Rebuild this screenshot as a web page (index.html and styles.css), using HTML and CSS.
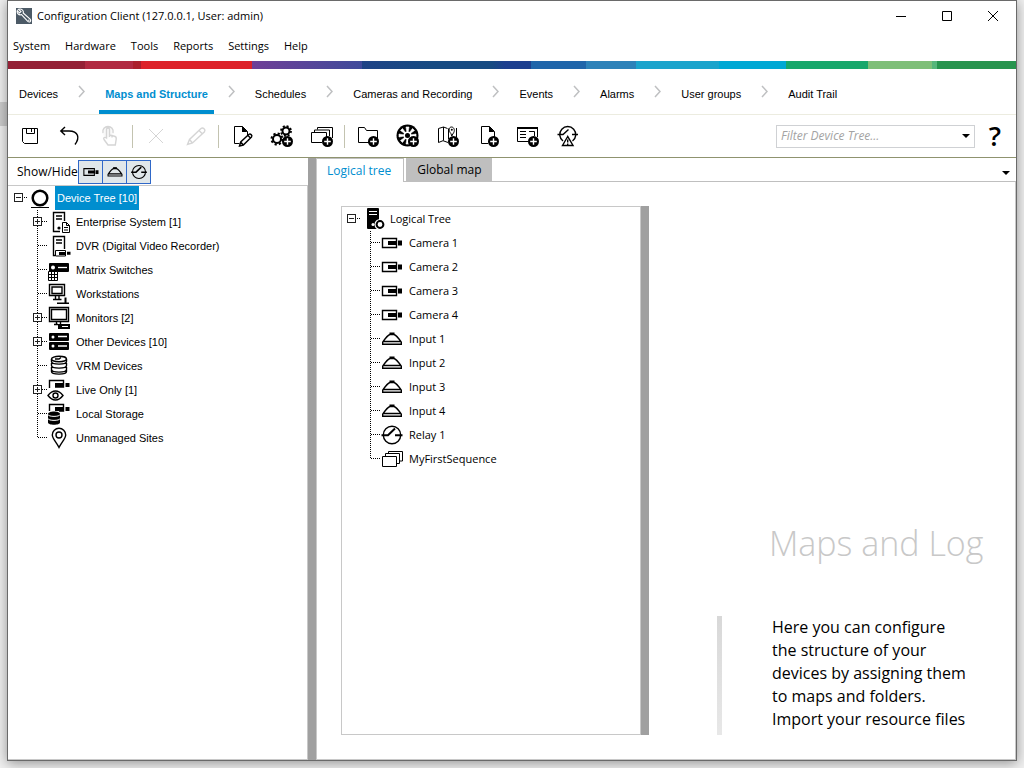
FILE: index.html
```html
<!DOCTYPE html>
<html lang="en">
<head>
<meta charset="utf-8">
<title>Configuration Client</title>
<link rel="stylesheet" href="styles.css">
</head>
<body>
<svg class="sprite" aria-hidden="true">
  <symbol id="plus" viewBox="0 0 24 24"><circle cx="17.5" cy="17.5" r="5.5" fill="#000"/><path d="M17.5 14.2v6.6M14.2 17.5h6.6" stroke="#fff" stroke-width="1.4"/></symbol>
  <symbol id="joint-root" viewBox="0 0 19 24"><path d="M15 11.500h5" class="dots"/><path d="M5.500 7.500h8v8h-8zM7 11.500h5" class="thin"/></symbol>
  <symbol id="joint-mid" viewBox="0 0 19 24"><path d="M9.500 0v24M10 11.500h9" class="dots"/></symbol>
  <symbol id="joint-plus" viewBox="0 0 19 24"><path d="M9.500 0v24M14 11.500h5" class="dots"/><path d="M5.500 7.500h8v8h-8z" fill="#fff" class="thin box"/><path d="M7 11.500h5M9.500 9v5" class="thin"/></symbol>
  <symbol id="joint-end" viewBox="0 0 19 24"><path d="M9.500 0v12M10 11.500h9" class="dots"/></symbol>
  <symbol id="cam" viewBox="0 0 24 24"><path d="M2.500 7.500h14v9h-14z" class="s15"/><path d="M8 10h9v4H8zM18 9.500h4v5h-4z"/></symbol>
  <symbol id="input" viewBox="0 0 24 24"><path d="M2.700 17.300v-2.100c2.300-3.400 5.300-7.200 7.300-7.700h4c2 .5 5 4.300 7.300 7.700v2.100zM3 14.500h18" class="s15"/><path d="M9.500 5.500h5V8h-5z"/></symbol>
  <symbol id="relay" viewBox="0 0 24 24"><circle cx="12" cy="12" r="8.700" class="s15"/><path d="M1.500 12.200H8l7-6.700M15 12.200h7.500" class="s2"/></symbol>
  <symbol id="sequence" viewBox="0 0 24 24"><path d="M2.500 9.500h14v10h-14zM5.500 9V6.500h14v10H17M8.500 6V4.500h14v9.500H20" class="s1"/></symbol>
</svg>

<main class="window">
  <header class="titlebar">
    <svg class="app-icon" viewBox="0 0 16 16" aria-hidden="true"><path fill="#4c5a66" d="M0 0h16v16H0z"/><path d="M2.500 1.300 5 3.500 3.500 5 1.300 2.600C.5 5.500 3 7.500 5.500 6.600l6.300 6.800c2 1.500 3.700-.3 2.300-2.200L7.200 5C8 2.500 5.500.3 2.500 1.300z" fill="none" stroke="#fff" stroke-width="1.100"/><circle cx="12.800" cy="12.300" r=".7" fill="#fff"/></svg>
    <h1>Configuration Client (127.0.0.1, User: admin)</h1>
    <div class="window-controls">
      <button aria-label="Minimize"><svg viewBox="0 0 12 12"><path d="M1 6.500h10" class="s1"/></svg></button>
      <button aria-label="Maximize"><svg viewBox="0 0 12 12"><path d="M1.500 1.500h9v9h-9z" class="s1"/></svg></button>
      <button aria-label="Close"><svg viewBox="0 0 12 12"><path d="m1 1 10 10M11 1 1 11" class="s1"/></svg></button>
    </div>
  </header>
  <div class="menubar" role="menubar">
    <button role="menuitem">System</button>
    <button role="menuitem">Hardware</button>
    <button role="menuitem">Tools</button>
    <button role="menuitem">Reports</button>
    <button role="menuitem">Settings</button>
    <button role="menuitem">Help</button>
  </div>
  <div class="stripe"></div>
  <nav class="steps">
    <a href="#devices">Devices</a>
    <svg viewBox="0 0 7 13"><path d="m1 1 5 5.500-5 5.500"/></svg>
    <a href="#maps" class="current" aria-current="page">Maps and Structure</a>
    <svg viewBox="0 0 7 13"><path d="m1 1 5 5.500-5 5.500"/></svg>
    <a href="#schedules">Schedules</a>
    <svg viewBox="0 0 7 13"><path d="m1 1 5 5.500-5 5.500"/></svg>
    <a href="#cameras">Cameras and Recording</a>
    <svg viewBox="0 0 7 13"><path d="m1 1 5 5.500-5 5.500"/></svg>
    <a href="#events">Events</a>
    <svg viewBox="0 0 7 13"><path d="m1 1 5 5.500-5 5.500"/></svg>
    <a href="#alarms">Alarms</a>
    <svg viewBox="0 0 7 13"><path d="m1 1 5 5.500-5 5.500"/></svg>
    <a href="#groups">User groups</a>
    <svg viewBox="0 0 7 13"><path d="m1 1 5 5.500-5 5.500"/></svg>
    <a href="#audit">Audit Trail</a>
  </nav>

  <div class="toolbar">
    <button aria-label="Save"><svg viewBox="0 0 24 24"><path d="M4.500 4.500h15v15h-13l-2-2zM8.500 4.500v5h8v-5M13.500 5v3" class="s1"/></svg></button>
    <button aria-label="Undo"><svg viewBox="0 0 24 24"><path d="M7 3 2.800 7 7 11M3 7h8c9.500 0 11 7 6 13.500" class="s15"/></svg></button>
    <button aria-label="Activate" disabled><svg viewBox="0 0 24 24"><circle cx="10" cy="8" r="5.500" fill="#ddd"/><path d="M8.500 14V5.500c0-2 3-2 3 0V11l5 1.200c1.500.4 2 1.300 1.700 3l-.9 5.800H10l-4-5.500c-1-1.600.6-2.800 2.500-1.500zM11.500 11v2M14 11.500v2M5 9c-1-4 2-6.500 5-6.500S16 5 15 9" class="s15"/></svg></button>
    <span class="sep"></span>
    <button aria-label="Delete" disabled><svg viewBox="0 0 24 24"><path d="m5 5 14 14M19 5 5 19" class="s1"/></svg></button>
    <button aria-label="Edit" disabled><svg viewBox="0 0 24 24"><path d="m3.500 20.500 2-5L17 4.500c2-1.500 5 1 3.500 3.200L8.500 19zM15 6.500l3.500 3.500M5.500 15.500l3 3.500" class="s15"/></svg></button>
    <span class="sep"></span>
    <button aria-label="Edit document"><svg viewBox="0 0 24 24"><path d="M9.500 19.500h-5v-17h8l5 5v3.500" class="s1"/><path d="M12 2v6h5.500z"/><path d="m9.500 22 1.200-4 8-7.500c1.700-1.300 4 .8 2.800 2.500l-8.200 8zM18 11.500l2.700 2.800M10.700 18l2.600 3" class="s15"/></svg></button>
    <button aria-label="Add device"><svg viewBox="0 0 24 24"><circle cx="7" cy="15" r="4" class="s2"/><circle cx="7" cy="15" r="5.500" fill="none" stroke="#000" stroke-width="2" stroke-dasharray="2.200 2.120"/><circle cx="16" cy="7" r="3.500" class="s2"/><circle cx="16" cy="7" r="5" fill="none" stroke="#000" stroke-width="1.800" stroke-dasharray="2 1.930"/><use href="#plus"/></svg></button>
    <button aria-label="Add sequence"><svg viewBox="0 0 24 24"><path d="M12 18.500H1.500v-10h15V13M4.500 8V6h15v6M7.500 5.500v-2h15V14" class="s1"/><use href="#plus"/></svg></button>
    <span class="sep"></span>
    <button aria-label="Add folder"><svg viewBox="0 0 24 24"><path d="M13 18.500H2.500v-15h6l2 3h11V14" class="s1"/><use href="#plus"/></svg></button>
    <button aria-label="Add wheel"><svg viewBox="0 0 24 24"><circle cx="11.500" cy="11.500" r="11"/><path d="M11.500 11.500 10 3h3zM11.500 11.500 16.500 4.500l2 2zM11.500 11.500l8.500-1.500v3zM11.500 11.500 4.500 6.500l2-2zM11.500 11.500 3 10v3zM11.500 11.500 6.500 18.500l-2-2zM11.500 11.500l1.500 8.500h-3z" fill="#fff" stroke="#fff" stroke-width=".6"/><circle cx="11.500" cy="11.500" r="4" fill="#fff"/><circle cx="11.500" cy="11.500" r="2.500"/><use href="#plus"/></svg></button>
    <button aria-label="Add map"><svg viewBox="0 0 24 24"><path d="M12 18.500l-5-1.800-4.500 1.800V4.500L7.500 3l4 1.500M7.500 3v13.500M12.500 4.500V15M20.500 4v9M15 9.700C12.500 7 12.700 3 15.500 3s4 4 1.300 7l-1 2z" class="s1"/><circle cx="15.800" cy="5.800" r="1"/><use href="#plus"/></svg></button>
    <button aria-label="Add document"><svg viewBox="0 0 24 24"><path d="M12 19.500H5.500v-17h8l5 5V13" class="s1"/><path d="M13 2v6h5.500z"/><use href="#plus"/></svg></button>
    <button aria-label="Add script"><svg viewBox="0 0 24 24"><path d="M12 17.500H1.500v-14h20V13M4 7.500h6M4 10.500h6M4 13.500h6M13 7.500h5.500V12" class="s1"/><path d="M1 3h21v2H1z"/><use href="#plus"/></svg></button>
    <button aria-label="Add malfunction relay"><svg viewBox="0 0 24 24"><path d="M7 17a8 8 0 1 1 9.500 0M1.500 10.500H7l5.500-5M16 10.500h6" class="s15"/><path d="M11.700 12.500 6.500 21.500h10.500zM11.700 15.500v3M11.700 19.500v1.500" class="s15"/></svg></button>
    <label class="filter">
      <select aria-label="Filter Device Tree"><option>Filter Device Tree...</option></select>
      <svg viewBox="0 0 8 4"><path d="M0 0h8L4 4z"/></svg>
    </label>
    <button class="help" aria-label="Help">?</button>
  </div>

  <div class="workspace">
    <section class="devices">
      <div class="showhide">
        <span>Show/Hide</span>
        <button aria-label="Cameras" aria-pressed="true"><svg viewBox="0 0 24 24"><use href="#cam"/></svg></button>
        <button aria-label="Inputs" aria-pressed="true"><svg viewBox="0 0 24 24"><use href="#input"/></svg></button>
        <button aria-label="Relays" aria-pressed="true"><svg viewBox="0 0 24 24"><use href="#relay"/></svg></button>
      </div>
      <ul class="tree device-tree">
        <li>
          <div class="row"><button class="joint" aria-label="Collapse"><svg viewBox="0 0 19 24"><use href="#joint-root"/></svg></button><svg class="icon" viewBox="0 0 24 24"><circle cx="12" cy="12" r="7.300" class="s25"/><path d="M3 21.500h18" class="s1"/></svg><span class="selected">Device Tree [10]</span></div>
          <ul>
            <li class="row"><button class="joint" aria-label="Expand"><svg viewBox="0 0 19 24"><use href="#joint-plus"/></svg></button><svg class="icon" viewBox="0 0 24 24"><path d="M13 21.500H6.500v-19h11V11M9 6h6M9 9h6" class="s15"/><circle cx="12" cy="18" r="1.600"/><path d="M15.500 12.500h4l3 3v7h-7zM19.500 12.500v3h3M17 17.500h4M17 20h4" class="s1"/></svg><span>Enterprise System [1]</span></li>
            <li class="row"><svg class="joint" viewBox="0 0 19 24"><use href="#joint-mid"/></svg><svg class="icon" viewBox="0 0 24 24"><path d="M8 21.500H6.500v-19h11V15M9 6h6M9 9h6" class="s15"/><path d="M8.500 16.500h10v5.500h-10z" fill="#fff" stroke="#000"/><path d="M12 18h6.500v3H12zM20 17.800h3.500v3H20z"/></svg><span>DVR (Digital Video Recorder)</span></li>
            <li class="row"><svg class="joint" viewBox="0 0 19 24"><use href="#joint-mid"/></svg><svg class="icon" viewBox="0 0 24 24"><rect x="2" y="5" width="20" height="9" rx="1"/><path d="M11 9.500h9" stroke="#fff" stroke-width="1.300"/><circle cx="6" cy="9.500" r="2" fill="#fff"/><path d="M1.500 13.500h9v9h-9zM4.500 13.500v9M7.500 13.500v9M1.500 16.500h9M1.500 19.500h9" fill="#fff" stroke="#000"/></svg><span>Matrix Switches</span></li>
            <li class="row"><svg class="joint" viewBox="0 0 19 24"><use href="#joint-mid"/></svg><svg class="icon" viewBox="0 0 24 24"><path d="M2.500 2.500h15v11h-15zM5 5h10v6.500H5zM8.500 14v3M12 14v3M6 17.500h8.500" class="s15"/><path d="M10 20.500h12V22H10zM17.500 15.500h2v6h-2z"/></svg><span>Workstations</span></li>
            <li class="row"><button class="joint" aria-label="Expand"><svg viewBox="0 0 19 24"><use href="#joint-plus"/></svg></button><svg class="icon" viewBox="0 0 24 24"><path d="M2.500 1.500h19v14h-19zM4.500 3.500h15v10h-15zM9.500 16v3M13.500 16v2M7 18.500h4" class="s15"/><path d="M11 18h12v5H11z"/><path d="M15 20.500h6" stroke="#fff"/></svg><span>Monitors [2]</span></li>
            <li class="row"><button class="joint" aria-label="Expand"><svg viewBox="0 0 19 24"><use href="#joint-plus"/></svg></button><svg class="icon" viewBox="0 0 24 24"><rect x="2" y="3" width="20" height="8" rx="1"/><rect x="2" y="12" width="20" height="8" rx="1"/><path d="M11 6.500h9M11 16h9" stroke="#fff" stroke-width="1.300"/><circle cx="6" cy="7" r="1.500" fill="#fff"/><circle cx="6" cy="16" r="1.500" fill="#fff"/></svg><span>Other Devices [10]</span></li>
            <li class="row"><svg class="joint" viewBox="0 0 19 24"><use href="#joint-mid"/></svg><svg class="icon" viewBox="0 0 24 24"><ellipse cx="12" cy="5" rx="7.500" ry="2.700" class="s15"/><path d="M4.500 5v2.500c0 3.500 15 3.500 15 0V5M4.500 9v2.500c0 3.500 15 3.500 15 0V9M4.500 13v2.500c0 3.500 15 3.500 15 0V13M4.500 16v1.500c0 3.500 15 3.500 15 0V16M8 5h4l2-1.500" class="s15"/></svg><span>VRM Devices</span></li>
            <li class="row"><button class="joint" aria-label="Expand"><svg viewBox="0 0 19 24"><use href="#joint-plus"/></svg></button><svg class="icon" viewBox="0 0 24 24"><path d="M2.500 10V2.500h14V9H8" class="s15"/><path d="M8 5h9v4H8zM18.500 5h4v4h-4z"/><path d="M1 17.500c4.500-6 10.500-6 15 0-4.500 6-10.500 6-15 0z" class="s15"/><circle cx="8.500" cy="17.500" r="2.500" class="s15"/></svg><span>Live Only [1]</span></li>
            <li class="row"><svg class="joint" viewBox="0 0 19 24"><use href="#joint-mid"/></svg><svg class="icon" viewBox="0 0 24 24"><path d="M2.500 9V2.500h14V9H12" class="s15"/><path d="M8 5h9v4H8zM18.500 5h4v4h-4z"/><path d="M1 12c0-3.500 12-3.500 12 0v8.500c0 3-12 3-12 0z"/><path d="M1 12.500c0 2.500 12 2.500 12 0M1 16.500c0 2.500 12 2.500 12 0" fill="none" stroke="#fff"/></svg><span>Local Storage</span></li>
            <li class="row"><svg class="joint" viewBox="0 0 19 24"><use href="#joint-end"/></svg><svg class="icon" viewBox="0 0 24 24"><path d="M12 21.500C9.500 16.500 5.300 12.500 5.300 9a6.700 6.700 0 0 1 13.400 0c0 3.500-4.200 7.500-6.700 12.500z" class="s15"/><circle cx="12" cy="9" r="3" class="s15"/></svg><span>Unmanaged Sites</span></li>
          </ul>
        </li>
      </ul>
    </section>
    <div class="splitter"></div>
    <section class="content">
      <div class="tabs" role="tablist">
        <button role="tab" class="active" aria-selected="true">Logical tree</button>
        <button role="tab" aria-selected="false">Global map</button>
        <button class="more" aria-label="More tabs"><svg viewBox="0 0 8 4"><path d="M0 0h8L4 4z"/></svg></button>
      </div>
      <div class="panel">
        <ul class="tree logical-tree">
          <li>
            <div class="row"><button class="joint" aria-label="Collapse"><svg viewBox="0 0 19 24"><use href="#joint-root"/></svg></button><svg class="icon" viewBox="0 0 24 24"><rect x="6" y="1" width="12" height="21" rx="1"/><path d="M8 4.500h8M8 7.500h8" stroke="#fff" stroke-width="1.200"/><circle cx="12" cy="17.500" r="1.500" fill="#fff"/><circle cx="19" cy="17.500" r="3.500" fill="#fff" stroke="#fff" stroke-width="4"/><circle cx="19" cy="17.500" r="3.400" fill="#fff" stroke="#000" stroke-width="2"/></svg><span>Logical Tree</span></div>
            <ul>
              <li class="row"><svg class="joint" viewBox="0 0 19 24"><use href="#joint-mid"/></svg><svg class="icon" viewBox="0 0 24 24"><use href="#cam"/></svg><span>Camera 1</span></li>
              <li class="row"><svg class="joint" viewBox="0 0 19 24"><use href="#joint-mid"/></svg><svg class="icon" viewBox="0 0 24 24"><use href="#cam"/></svg><span>Camera 2</span></li>
              <li class="row"><svg class="joint" viewBox="0 0 19 24"><use href="#joint-mid"/></svg><svg class="icon" viewBox="0 0 24 24"><use href="#cam"/></svg><span>Camera 3</span></li>
              <li class="row"><svg class="joint" viewBox="0 0 19 24"><use href="#joint-mid"/></svg><svg class="icon" viewBox="0 0 24 24"><use href="#cam"/></svg><span>Camera 4</span></li>
              <li class="row"><svg class="joint" viewBox="0 0 19 24"><use href="#joint-mid"/></svg><svg class="icon" viewBox="0 0 24 24"><use href="#input"/></svg><span>Input 1</span></li>
              <li class="row"><svg class="joint" viewBox="0 0 19 24"><use href="#joint-mid"/></svg><svg class="icon" viewBox="0 0 24 24"><use href="#input"/></svg><span>Input 2</span></li>
              <li class="row"><svg class="joint" viewBox="0 0 19 24"><use href="#joint-mid"/></svg><svg class="icon" viewBox="0 0 24 24"><use href="#input"/></svg><span>Input 3</span></li>
              <li class="row"><svg class="joint" viewBox="0 0 19 24"><use href="#joint-mid"/></svg><svg class="icon" viewBox="0 0 24 24"><use href="#input"/></svg><span>Input 4</span></li>
              <li class="row"><svg class="joint" viewBox="0 0 19 24"><use href="#joint-mid"/></svg><svg class="icon" viewBox="0 0 24 24"><use href="#relay"/></svg><span>Relay 1</span></li>
              <li class="row"><svg class="joint" viewBox="0 0 19 24"><use href="#joint-end"/></svg><svg class="icon" viewBox="0 0 24 24"><use href="#sequence"/></svg><span>MyFirstSequence</span></li>
            </ul>
          </li>
        </ul>
        <div class="splitter"></div>
        <div class="intro">
          <h2>Maps and Log</h2>
          <div class="intro-body">
            <div class="intro-bar"></div>
            <p>Here you can configure<br>the structure of your<br>devices by assigning them<br>to maps and folders.<br>Import your resource files<br>and sequences for</p>
          </div>
        </div>
      </div>
    </section>
  </div>
</main>
</body>
</html>
```
FILE: styles.css
```css
* { box-sizing: border-box; }

body {
  margin: 0;
  height: 100vh;
  padding: 0 7px 7px;
  overflow: hidden;
  background: linear-gradient(#f0f0f0 102px, #cdcdcd 102px, #cdcdcd 126px, #f0f0f0 126px) no-repeat #f0f0f0;
  background-size: 7px 100%;
  font: 11px/16px "Open Sans", "Noto Sans", sans-serif;
  color: #000;
}

.sprite { display: none; }

button {
  border: 0;
  padding: 0;
  background: none;
  font: inherit;
  color: inherit;
}

svg { display: block; flex: none; }
.s1, .s15, .s2, .s25 { fill: none; stroke: #000; stroke-width: 1; }
.s15 { stroke-width: 1.4; }
.s2 { stroke-width: 2; }
.s25 { stroke-width: 2.5; }
.dots { fill: none; stroke: #000; stroke-dasharray: 1 1; shape-rendering: crispEdges; }
.thin { fill: none; stroke: #222; shape-rendering: crispEdges; }
.thin.box { fill: #fff; }

.window {
  display: flex;
  flex-direction: column;
  height: 100%;
  border: 1px solid #6a6a6a;
  background: #fff;
  box-shadow: 0 2px 12px rgba(0, 0, 0, .4);
}

.titlebar {
  display: flex;
  align-items: center;
  height: 30px;
  padding-left: 8px;
  gap: 5px;
}
.app-icon { width: 16px; height: 16px; }
.titlebar h1 { flex: 1; margin: 0; font-size: 11px; font-weight: 400; }
.window-controls { display: flex; }
.window-controls button { width: 46px; height: 28px; display: grid; place-items: center; }
.window-controls svg { width: 12px; height: 12px; }

.menubar { display: flex; gap: 15px; height: 30px; padding-left: 5px; }

.stripe {
  height: 8px;
  background: linear-gradient(90deg,
    #942136 7.6%, #b12a42 7.6%, #b12a42 12.4%, #ab1f2c 12.4%, #ab1f2c 13.2%,
    #dd2229 13.2%, #dd2229 24.2%, #6f3f97 24.2%, #3f4a9b 35.1%, #1e4386 35.1%,
    #164a82 42%, #164a82 48%, #1d3f8f 49.3%, #1d3f8f 51.9%, #1f65aa 51.9%,
    #1f65aa 57.3%, #2d82b9 57.3%, #2d82b9 62.3%, #1ba4cc 62.3%, #1ba4cc 70.5%,
    #00a8d4 70.5%, #00a8d4 77.2%, #17a76b 77.2%, #17a76b 85.3%, #7ebf78 85.3%,
    #7ebf78 91.7%, #55b67a 91.7%, #55b67a 92.2%, #27944e 92.2%);
}

.steps {
  display: flex;
  align-items: center;
  gap: 14px;
  height: 46px;
  padding: 0 5px;
  border-bottom: 1px solid #ecece0;
  font: 11px/16px "Liberation Sans", Arial, sans-serif;
}
.steps a {
  display: flex;
  align-items: center;
  height: 45px;
  padding: 8px 6px 0;
  border-bottom: 4px solid transparent;
  color: inherit;
  text-decoration: none;
  white-space: nowrap;
}
.steps a.current { color: #008ecf; border-color: #008ecf; font-weight: 700; }
.steps svg { width: 7px; height: 13px; }
.steps path { fill: none; stroke: #bfc0c2; stroke-width: 1.5; }

.toolbar {
  display: flex;
  align-items: center;
  height: 43px;
  padding: 0 1px 0 2px;
  border-bottom: 1px solid #8f936f;
}
.toolbar button { width: 40px; height: 32px; display: grid; place-items: center; }
.toolbar button svg { width: 24px; height: 24px; }
.toolbar button:disabled svg { opacity: .16; }
.sep { width: 6px; height: 23px; background: linear-gradient(#c3c3b0, #c3c3b0) 2px 0 / 1px 100% no-repeat; }
.filter { display: grid; align-items: center; width: 199px; margin-left: auto; }
.filter select {
  grid-area: 1 / 1;
  appearance: none;
  width: 100%;
  height: 23px;
  padding: 0 4px;
  border: 1px solid #cfd1d4;
  border-radius: 0;
  background: #fff;
  font: italic 12px/16px "Open Sans", "Noto Sans", sans-serif;
  color: #a3a3a3;
}
.filter svg { grid-area: 1 / 1; justify-self: end; width: 8px; height: 4px; margin-right: 5px; pointer-events: none; }
.toolbar .help { font-size: 27px; font-weight: 600; line-height: 32px; }

.workspace { flex: 1; display: flex; min-height: 0; }
.splitter { flex: none; width: 9px; background: #a0a0a0; border-right: 1px solid #c8c8c8; }

.devices { display: flex; flex-direction: column; width: 300px; flex: none; }
.showhide { display: flex; align-items: center; height: 27px; padding-left: 9px; font-size: 12px; }
.showhide span { width: 61px; }
.showhide button {
  width: 25px;
  height: 24px;
  margin-right: -1px;
  display: grid;
  place-items: center;
  border: 1px solid #2f68c8;
  background: #e0e7ea;
}
.showhide svg { width: 18px; height: 18px; }

.tree, .tree ul { margin: 0; padding: 0; list-style: none; }
.tree ul { padding-left: 19px; }
.row { display: flex; align-items: center; height: 24px; white-space: nowrap; }
.joint, .joint svg { width: 19px; height: 24px; flex: none; }
.icon { width: 24px; height: 24px; margin-right: 3px; }
.row span { padding: 0 2px; line-height: 24px; }
.row .selected { background: #008ecf; color: #fff; }

.tree.device-tree {
  flex: 1;
  padding-left: 1px;
  border: 1px solid #c8c8c8;
  border-left: 0;
  font-family: "Liberation Sans", Arial, sans-serif;
}

.content { flex: 1; display: flex; flex-direction: column; min-width: 0; }
.tabs { display: flex; height: 24px; font-size: 12px; border-bottom: 1px solid #bfbfbf; }
.tabs button { padding: 0 10px 0 11px; background: #bfbfbf; }
.tabs .active {
  margin: 0 2px -1px 0;
  padding: 0 12px 0 10px;
  border: 1px solid #bfbfbf;
  border-width: 1px 1px 0 0;
  background: #fff;
  color: #008ecf;
}
.tabs .more { margin-left: auto; padding: 6px 6px 0; background: none; }
.more svg { width: 8px; height: 4px; }

.panel {
  flex: 1;
  display: flex;
  min-height: 0;
  padding: 24px 0 24px 24px;
  border: 1px solid #c8c8c8;
  border-width: 0 1px 1px 0;
}
.logical-tree { width: 300px; flex: none; border: 1px solid #c8c8c8; }
.panel .logical-tree { border: 1px solid #c8c8c8; }
.panel .splitter { width: 8px; border: 0; }

.intro { flex: 1; min-width: 0; padding: 314px 0 0 68px; overflow: hidden; }
.intro h2 { margin: 0 0 0 52px; font-size: 34px; line-height: 46px; font-weight: 300; color: #c8c8c8; white-space: nowrap; }
.intro-body { display: flex; gap: 50px; margin-top: 50px; }
.intro-bar { flex: none; width: 5px; background: linear-gradient(#d8d8d8, #eaeaea); }
.intro p { margin: 0; font-size: 16px; line-height: 23px; white-space: nowrap; }
```
